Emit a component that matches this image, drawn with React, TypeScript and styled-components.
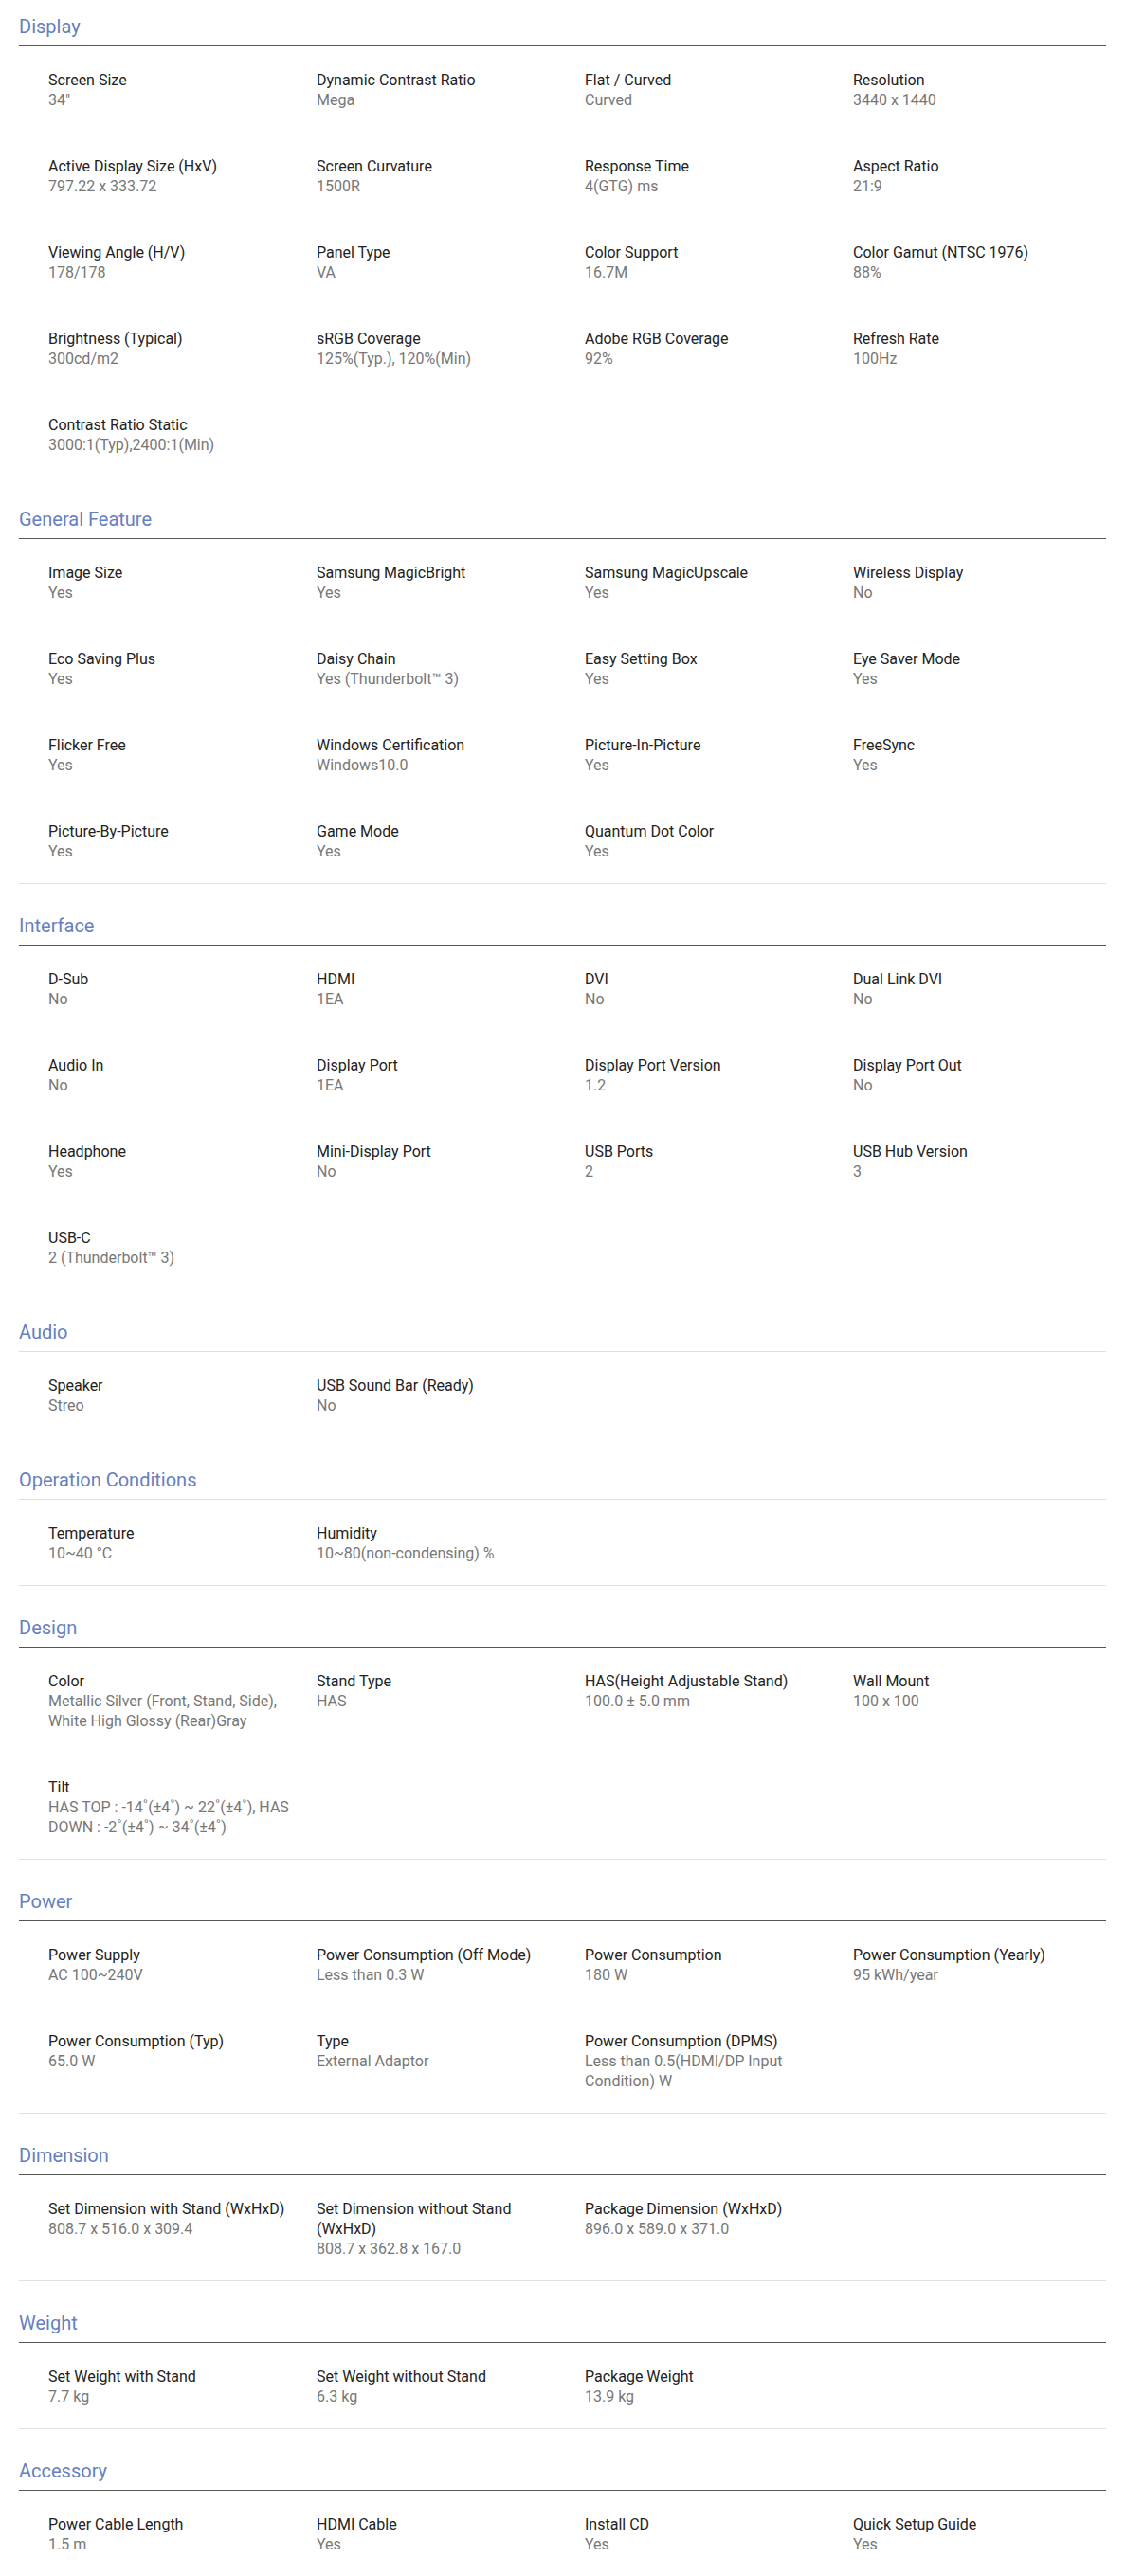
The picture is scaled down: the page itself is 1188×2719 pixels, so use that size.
import React from 'react';
import styled, { createGlobalStyle } from 'styled-components';

const GlobalStyle = createGlobalStyle`
  html, body { margin: 0; padding: 0; background: #ffffff; }
  body {
    font-family: Roboto, "Liberation Sans", Arial, sans-serif;
    -webkit-font-smoothing: antialiased;
  }
`;

type Spec = { label: string; value: string };
type SectionData = { title: string; light?: boolean; separator: boolean; specs: Spec[] };

const sections: SectionData[] = [
  {
    title: 'Display',
    separator: true,
    specs: [
      { label: 'Screen Size', value: '34"' },
      { label: 'Dynamic Contrast Ratio', value: 'Mega' },
      { label: 'Flat / Curved', value: 'Curved' },
      { label: 'Resolution', value: '3440 x 1440' },
      { label: 'Active Display Size (HxV)', value: '797.22 x 333.72' },
      { label: 'Screen Curvature', value: '1500R' },
      { label: 'Response Time', value: '4(GTG) ms' },
      { label: 'Aspect Ratio', value: '21:9' },
      { label: 'Viewing Angle (H/V)', value: '178/178' },
      { label: 'Panel Type', value: 'VA' },
      { label: 'Color Support', value: '16.7M' },
      { label: 'Color Gamut (NTSC 1976)', value: '88%' },
      { label: 'Brightness (Typical)', value: '300cd/m2' },
      { label: 'sRGB Coverage', value: '125%(Typ.), 120%(Min)' },
      { label: 'Adobe RGB Coverage', value: '92%' },
      { label: 'Refresh Rate', value: '100Hz' },
      { label: 'Contrast Ratio Static', value: '3000:1(Typ),2400:1(Min)' },
    ],
  },
  {
    title: 'General Feature',
    separator: true,
    specs: [
      { label: 'Image Size', value: 'Yes' },
      { label: 'Samsung MagicBright', value: 'Yes' },
      { label: 'Samsung MagicUpscale', value: 'Yes' },
      { label: 'Wireless Display', value: 'No' },
      { label: 'Eco Saving Plus', value: 'Yes' },
      { label: 'Daisy Chain', value: 'Yes (Thunderbolt™ 3)' },
      { label: 'Easy Setting Box', value: 'Yes' },
      { label: 'Eye Saver Mode', value: 'Yes' },
      { label: 'Flicker Free', value: 'Yes' },
      { label: 'Windows Certification', value: 'Windows10.0' },
      { label: 'Picture-In-Picture', value: 'Yes' },
      { label: 'FreeSync', value: 'Yes' },
      { label: 'Picture-By-Picture', value: 'Yes' },
      { label: 'Game Mode', value: 'Yes' },
      { label: 'Quantum Dot Color', value: 'Yes' },
    ],
  },
  {
    title: 'Interface',
    separator: false,
    specs: [
      { label: 'D-Sub', value: 'No' },
      { label: 'HDMI', value: '1EA' },
      { label: 'DVI', value: 'No' },
      { label: 'Dual Link DVI', value: 'No' },
      { label: 'Audio In', value: 'No' },
      { label: 'Display Port', value: '1EA' },
      { label: 'Display Port Version', value: '1.2' },
      { label: 'Display Port Out', value: 'No' },
      { label: 'Headphone', value: 'Yes' },
      { label: 'Mini-Display Port', value: 'No' },
      { label: 'USB Ports', value: '2' },
      { label: 'USB Hub Version', value: '3' },
      { label: 'USB-C', value: '2 (Thunderbolt™ 3)' },
    ],
  },
  {
    title: 'Audio',
    light: true,
    separator: false,
    specs: [
      { label: 'Speaker', value: 'Streo' },
      { label: 'USB Sound Bar (Ready)', value: 'No' },
    ],
  },
  {
    title: 'Operation Conditions',
    light: true,
    separator: true,
    specs: [
      { label: 'Temperature', value: '10~40 °C' },
      { label: 'Humidity', value: '10~80(non-condensing) %' },
    ],
  },
  {
    title: 'Design',
    separator: true,
    specs: [
      { label: 'Color', value: 'Metallic Silver (Front, Stand, Side), White High Glossy (Rear)Gray' },
      { label: 'Stand Type', value: 'HAS' },
      { label: 'HAS(Height Adjustable Stand)', value: '100.0 ± 5.0 mm' },
      { label: 'Wall Mount', value: '100 x 100' },
      { label: 'Tilt', value: 'HAS TOP : -14˚(±4˚) ~ 22˚(±4˚), HAS DOWN : -2˚(±4˚) ~ 34˚(±4˚)' },
    ],
  },
  {
    title: 'Power',
    separator: true,
    specs: [
      { label: 'Power Supply', value: 'AC 100~240V' },
      { label: 'Power Consumption (Off Mode)', value: 'Less than 0.3 W' },
      { label: 'Power Consumption', value: '180 W' },
      { label: 'Power Consumption (Yearly)', value: '95 kWh/year' },
      { label: 'Power Consumption (Typ)', value: '65.0 W' },
      { label: 'Type', value: 'External Adaptor' },
      { label: 'Power Consumption (DPMS)', value: 'Less than 0.5(HDMI/DP Input Condition) W' },
    ],
  },
  {
    title: 'Dimension',
    separator: true,
    specs: [
      { label: 'Set Dimension with Stand (WxHxD)', value: '808.7 x 516.0 x 309.4' },
      { label: 'Set Dimension without Stand (WxHxD)', value: '808.7 x 362.8 x 167.0' },
      { label: 'Package Dimension (WxHxD)', value: '896.0 x 589.0 x 371.0' },
    ],
  },
  {
    title: 'Weight',
    separator: true,
    specs: [
      { label: 'Set Weight with Stand', value: '7.7 kg' },
      { label: 'Set Weight without Stand', value: '6.3 kg' },
      { label: 'Package Weight', value: '13.9 kg' },
    ],
  },
  {
    title: 'Accessory',
    separator: true,
    specs: [
      { label: 'Power Cable Length', value: '1.5 m' },
      { label: 'HDMI Cable', value: 'Yes' },
      { label: 'Install CD', value: 'Yes' },
      { label: 'Quick Setup Guide', value: 'Yes' },
    ],
  },
];

const Page = styled.main`
  padding: 14px 21px 0 20px;
`;

const Section = styled.section<{ $separator: boolean }>`
  padding-top: 30px;
  border-bottom: ${(p) => (p.$separator ? '1px solid #e2e2e2' : '1px solid transparent')};

  &:first-child {
    padding-top: 0;
  }
`;

const Title = styled.h2<{ $light?: boolean }>`
  margin: 0;
  padding-bottom: 6px;
  font-size: 20px;
  line-height: 28px;
  font-weight: 400;
  color: #6580c2;
  border-bottom: 1px solid ${(p) => (p.$light ? '#e0e0e0' : '#555555')};
`;

const SpecList = styled.dl`
  margin: 0;
  padding: 25px 0 23px 31px;
  display: grid;
  grid-template-columns: repeat(3, 283px) 1fr;
  row-gap: 49px;
`;

const SpecItem = styled.div`
  padding-right: 22px;
`;

const Label = styled.dt`
  margin: 0;
  font-size: 16px;
  line-height: 21px;
  color: #222222;
`;

const Value = styled.dd`
  margin: 0;
  font-size: 16px;
  line-height: 21px;
  color: #777777;
`;

export default function App() {
  return (
    <>
      <GlobalStyle />
      <Page>
        {sections.map((s) => (
          <Section key={s.title} $separator={s.separator}>
            <Title $light={s.light}>{s.title}</Title>
            <SpecList>
              {s.specs.map((spec) => (
                <SpecItem key={spec.label}>
                  <Label>{spec.label}</Label>
                  <Value>{spec.value}</Value>
                </SpecItem>
              ))}
            </SpecList>
          </Section>
        ))}
      </Page>
    </>
  );
}
